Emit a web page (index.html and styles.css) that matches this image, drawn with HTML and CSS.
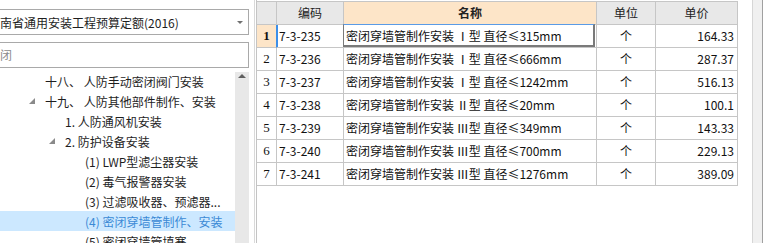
FILE: index.html
```html
<!DOCTYPE html>
<html lang="zh-CN">
<head>
  <meta charset="UTF-8">
  <title>定额库</title>
  <link rel="stylesheet" href="styles.css">
</head>
<body>
  <!-- Catalog tree -->
  <aside class="catalog">
    <div class="picker">
      <span>河南省通用安装工程预算定额(2016)</span>
      <svg class="picker-arrow" width="6" height="3" viewBox="0 0 6 3"><polygon points="0,0 6,0 3,3" fill="#707070"/></svg>
    </div>
    <div class="search">密闭</div>
    <div class="tree">
      <ul class="tree-list">
        <li class="node lv0"><span class="toggle"></span>十八、 人防手动密闭阀门安装</li>
        <li class="node lv0"><span class="toggle"><svg width="6" height="6" viewBox="0 0 6 6"><polygon points="6,0 6,6 0,6" fill="#8a8a8a"/></svg></span>十九、 人防其他部件制作、安装</li>
        <li class="node lv1"><span class="toggle"></span>1. 人防通风机安装</li>
        <li class="node lv1"><span class="toggle"><svg width="6" height="6" viewBox="0 0 6 6"><polygon points="6,0 6,6 0,6" fill="#8a8a8a"/></svg></span>2. 防护设备安装</li>
        <li class="node lv2"><span class="toggle"></span>(1) LWP型滤尘器安装</li>
        <li class="node lv2"><span class="toggle"></span>(2) 毒气报警器安装</li>
        <li class="node lv2"><span class="toggle"></span>(3) 过滤吸收器、预滤器...</li>
        <li class="node lv2 selected"><span class="toggle"></span>(4) 密闭穿墙管制作、安装</li>
        <li class="node lv2"><span class="toggle"></span>(5) 密闭穿墙管填塞</li>
      </ul>
      <div class="vscroll">
        <svg width="8" height="4" viewBox="0 0 8 4"><polygon points="4,0 8,4 0,4" fill="#606060"/></svg>
      </div>
    </div>
  </aside>

  <!-- Quota grid -->
  <div class="grid-pane">
    <div class="grid">
      <div class="cell hd"></div>
      <div class="cell hd">编码</div>
      <div class="cell hd active">名称</div>
      <div class="cell hd">单位</div>
      <div class="cell hd">单价</div>

      <div class="cell num current">1</div>
      <div class="cell code current">7-3-235</div>
      <div class="cell name focus">密闭穿墙管制作安装 Ⅰ型 直径≤315mm</div>
      <div class="cell unit">个</div>
      <div class="cell price">164.33</div>

      <div class="cell num">2</div>
      <div class="cell code">7-3-236</div>
      <div class="cell name">密闭穿墙管制作安装 Ⅰ型 直径≤666mm</div>
      <div class="cell unit">个</div>
      <div class="cell price">287.37</div>

      <div class="cell num">3</div>
      <div class="cell code">7-3-237</div>
      <div class="cell name">密闭穿墙管制作安装 Ⅰ型 直径≤1242mm</div>
      <div class="cell unit">个</div>
      <div class="cell price">516.13</div>

      <div class="cell num">4</div>
      <div class="cell code">7-3-238</div>
      <div class="cell name">密闭穿墙管制作安装 Ⅱ型 直径≤20mm</div>
      <div class="cell unit">个</div>
      <div class="cell price">100.1</div>

      <div class="cell num">5</div>
      <div class="cell code">7-3-239</div>
      <div class="cell name">密闭穿墙管制作安装 Ⅲ型 直径≤349mm</div>
      <div class="cell unit">个</div>
      <div class="cell price">143.33</div>

      <div class="cell num">6</div>
      <div class="cell code">7-3-240</div>
      <div class="cell name">密闭穿墙管制作安装 Ⅲ型 直径≤700mm</div>
      <div class="cell unit">个</div>
      <div class="cell price">229.13</div>

      <div class="cell num">7</div>
      <div class="cell code">7-3-241</div>
      <div class="cell name">密闭穿墙管制作安装 Ⅲ型 直径≤1276mm</div>
      <div class="cell unit">个</div>
      <div class="cell price">389.09</div>
    </div>
  </div>
  <div class="side-strip"></div>
</body>
</html>
```

FILE: styles.css
```css
/* General */
body {
  margin: 0;
  display: flex;
  height: 243px;
  overflow: hidden;
  background: #fff;
  font-family: "Noto Sans CJK SC", sans-serif;
  font-size: 12px;
  color: #1e1e1e;
}

/* Catalog panel */
.catalog {
  flex: none;
  width: 255px;
  box-sizing: border-box;
  padding: 9px 5px 0 0;
  border-right: 1px solid #d9d9d9;
  overflow: hidden;
}

.picker {
  margin-left: -17px;
  height: 26px;
  box-sizing: border-box;
  border: 1px solid #a9a9a9;
  padding: 0 5px 0 4px;
  display: flex;
  align-items: center;
  justify-content: space-between;
  white-space: nowrap;
}

.search {
  margin: 7px 0 0 -17px;
  height: 26px;
  box-sizing: border-box;
  border: 1px solid #a9a9a9;
  padding-left: 4px;
  line-height: 24px;
  color: #8c8c8c;
}

.tree {
  display: flex;
  margin-top: 3px;
  height: 172px;
}

.tree-list {
  flex: 1;
  list-style: none;
  margin: 0;
  padding: 0;
  overflow: hidden;
}

.node {
  height: 20px;
  display: flex;
  align-items: center;
  white-space: nowrap;
  padding-left: 26px;
}

.node.lv1 { padding-left: 46px; }
.node.lv2 { padding-left: 66px; }

.node.selected {
  background: #cce8ff;
  color: #3b8ad6;
}

.toggle {
  flex: none;
  width: 19px;
  display: flex;
  align-items: center;
}

.toggle svg {
  margin-left: 3px;
}

.vscroll {
  flex: none;
  width: 14px;
  margin-top: 1px;
  padding-top: 2px;
  background: #e8e8e8;
  display: flex;
  justify-content: center;
  align-items: flex-start;
}

/* Quota grid */
.grid-pane {
  flex: none;
  width: 497px;
  margin-left: 1px;
  box-sizing: border-box;
  border-left: 1px solid #c4c4c4;
  border-right: 1px solid #d6d6d6;
}

.grid {
  display: grid;
  grid-template-columns: 20px 67px 253px 59px 82px;
  grid-auto-rows: 23px;
  width: max-content;
  margin-top: 1px;
  border-top: 1px solid #c6c6c6;
}

.cell {
  position: relative;
  box-sizing: border-box;
  border-right: 1px solid #c6c6c6;
  border-bottom: 1px solid #c6c6c6;
  line-height: 22px;
  padding: 0 2px;
  white-space: nowrap;
  overflow: hidden;
  color: #111;
}

.cell.hd {
  background: #e8e8e8;
  text-align: center;
  color: #222;
}

.cell.hd.active {
  background: #fde5c8;
  font-weight: bold;
}

.cell.num {
  text-align: center;
  padding: 0;
  font-family: "Liberation Serif", serif;
  font-size: 13px;
}

.cell.num.current {
  background: #fde5c8;
  font-weight: bold;
  border-right-color: #3d8fe8;
}

.cell.code.current {
  box-shadow: inset 1px 0 #3d8fe8;
}

.cell.focus {
  overflow: visible;
}

.cell.focus::after {
  content: "";
  position: absolute;
  left: -1px;
  top: -1px;
  right: 1px;
  bottom: 0;
  border-left: 1px solid #7a7a7a;
  border-top: 1px solid #5a9be6;
  border-right: 2px solid #7a7a7a;
  border-bottom: 2px solid #7a7a7a;
}

.cell.unit {
  text-align: center;
}

.cell.price {
  text-align: right;
  padding-right: 3px;
}

.side-strip {
  flex: none;
  width: 10px;
  box-sizing: border-box;
  background: #f0f0f0;
  border-right: 1px solid #a0a0a0;
}
```
